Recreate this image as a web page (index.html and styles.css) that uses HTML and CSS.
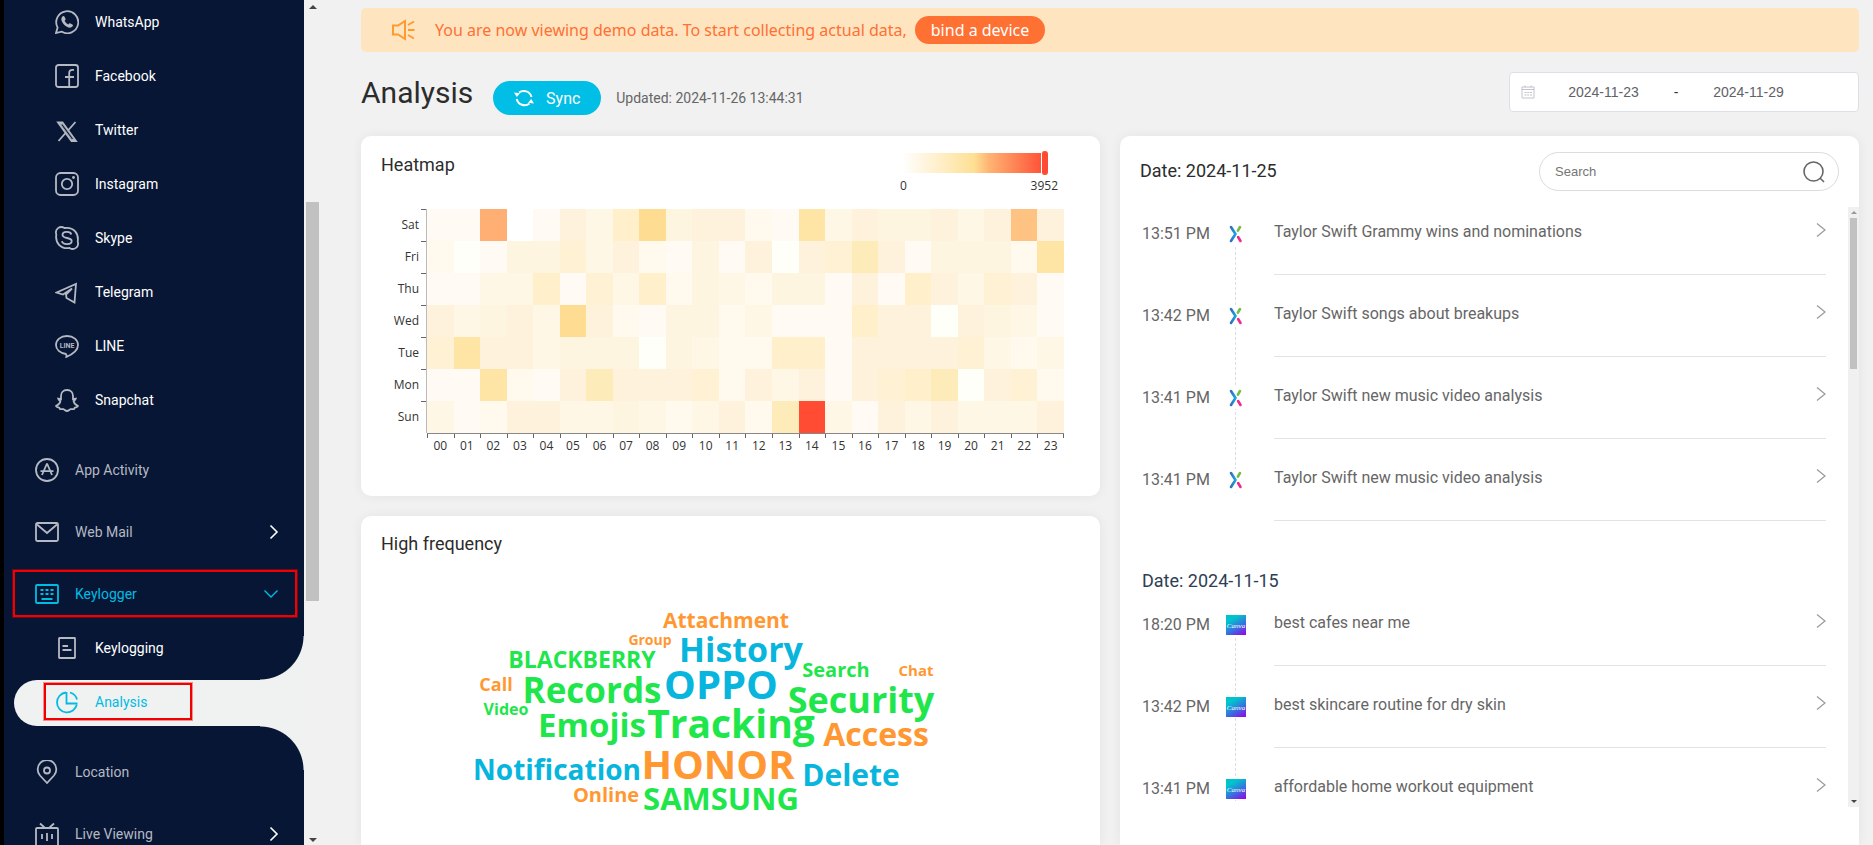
FILE: index.html
```html
<!DOCTYPE html>
<html lang="en">
<head>
<meta charset="utf-8">
<title>Keylogger Analysis</title>
<link rel="stylesheet" href="styles.css">
</head>
<body>
<svg class="defs" aria-hidden="true">
  <defs>
    <linearGradient id="canva" x1="0.2" y1="0" x2="0.8" y2="1">
      <stop offset="0.2" stop-color="#00c4cc"/><stop offset="0.65" stop-color="#3b6be0"/><stop offset="1" stop-color="#8a12e8"/>
    </linearGradient>
    <linearGradient id="blue" x1="0" y1="0" x2="1" y2="0">
      <stop offset="0" stop-color="#2f6fc0"/><stop offset="1" stop-color="#1aa5e0"/>
    </linearGradient>
    <symbol id="i-x" viewBox="-2 -1 20 22">
      <path d="M3 3 L7.500 10 L3 17" fill="none" stroke="url(#blue)" stroke-width="2.600" stroke-linejoin="round" stroke-linecap="round"/>
      <path d="M12 3 L9.900 6.600" stroke="#76bc43" stroke-width="2.600" stroke-linecap="round"/>
      <path d="M10.100 13 L12.500 17" stroke="#f0288c" stroke-width="2.600" stroke-linecap="round"/>
    </symbol>
    <symbol id="i-canva" viewBox="0 0 20 20">
      <rect width="20" height="20" fill="url(#canva)"/>
      <text x="10" y="13" text-anchor="middle" class="canva-text">Canva</text>
    </symbol>
    <symbol id="i-go" viewBox="0 0 10 16"><path d="M1 1.500 L9 8 L1 14.500" fill="none" stroke="#999" stroke-width="1.200"/></symbol>
    <symbol id="i-right" viewBox="0 0 10 16"><path d="M1.500 1.500 L8 8 L1.500 14.500" fill="none" stroke="currentColor" stroke-width="1.600"/></symbol>
  </defs>
</svg>
<div class="app">
  <nav class="sidebar">
    <ul class="menu">
      <li>
        <ul class="submenu">
          <li><a class="item sub" href="#"><svg viewBox="0 0 24 24"><path d="M1 23 L2.600 17.500 A11 11 0 1 1 6.500 21.600 Z"/><path class="fill" d="M7.500 6.500c.8-.8 1.600-.6 2 .2l1 2c.3.700-.1 1.300-.9 2 .9 1.700 2 2.800 3.800 3.700.7-.9 1.300-1.300 2-.9l2 1.100c.8.500.8 1.200 0 2-1.300 1.400-3.200 1.300-5.500.1-2.300-1.300-4-3-5-5.200-.9-2-.7-3.700.6-5z"/></svg>WhatsApp</a></li>
          <li><a class="item sub" href="#"><svg viewBox="0 0 24 24"><rect x="1" y="1" width="22" height="22" rx="2.500"/><path d="M19 5.800h-1.500c-2.300 0-3.300 1.200-3.300 3.200V23M10 13h9"/></svg>Facebook</a></li>
          <li><a class="item sub" href="#"><svg viewBox="0 0 24 24"><path d="M3 4.500h4.500L21 23h-4.500ZM20.500 4 13 12.500M3.500 23 11 14.500"/><path d="M5.300 4.500 18.700 23" stroke-width="2.200"/><path d="M6.800 6.500 17.500 21" class="cut"/></svg>Twitter</a></li>
          <li><a class="item sub" href="#"><svg viewBox="0 0 24 24"><rect x="1" y="1" width="22" height="22" rx="4.500"/><circle cx="12" cy="12" r="5.200"/><circle class="fill" cx="18.500" cy="5.500" r="1.400"/></svg>Instagram</a></li>
          <li><a class="item sub" href="#"><svg viewBox="0 0 24 24"><path d="M9.500 2C5-.8-.5 3 1.300 8.500 0 16.500 5.500 23.500 14.500 22c4.500 2.800 10-1 8.200-6.500C24 7.500 18.500.5 9.500 2Z"/><path d="M16.300 8.500C15.500 5 7.500 5 7.500 9c0 4 9.200 2 9.200 6 0 4.200-9 4.200-9.700.2"/></svg>Skype</a></li>
          <li><a class="item sub" href="#"><svg viewBox="0 0 24 24"><path d="M1.500 12.500 21 4 19.500 22.500 11.500 18 11 14.500 17 8.500 8 14.500Z"/></svg>Telegram</a></li>
          <li><a class="item sub" href="#"><svg viewBox="0 0 24 24"><path d="M12 2C5.500 2 1 6 1 11c0 4.500 4 8 10 9 .8.200.5 1.500.3 3C17 20.500 23 16.500 23 11c0-5-4.500-9-11-9Z"/><text class="line-text" x="12" y="13.500" text-anchor="middle">LINE</text></svg>LINE</a></li>
          <li><a class="item sub" href="#"><svg viewBox="0 0 24 24"><path d="M12 2c-4 0-6 2.700-6 6v3.200l-2.800-.6c.3 1.600 1.400 2 2.200 2.500C5 15.500 3.500 17 1 18c.6 1.600 2.400 1.300 3.300 1.800.4.500.3 1.300 1 1.400 1 .1 2-.4 3.200 0C9.800 21.800 10.500 23 12 23s2.200-1.200 3.500-1.800c1.200-.4 2.200.1 3.200 0 .7-.1.600-.9 1-1.400.9-.5 2.700-.2 3.300-1.800-2.500-1-4-2.500-4.400-4.900.8-.5 1.900-.9 2.200-2.500l-2.800.6V8c0-3.300-2-6-6-6Z"/></svg>Snapchat</a></li>
        </ul>
      </li>
      <li><a class="item" href="#"><svg viewBox="0 0 24 24"><circle cx="12" cy="12" r="11"/><path d="M12 5.500 7 17M12 5.500 17 17M5.500 13.200h13"/></svg>App Activity</a></li>
      <li><a class="item" href="#"><svg viewBox="0 0 24 24"><rect x="1" y="3" width="22" height="18" rx="1.500"/><path d="M2 4.500 12 13 22 4.500"/></svg>Web Mail<svg class="arrow"><use href="#i-right"/></svg></a></li>
      <li>
        <a class="item open" href="#"><svg viewBox="0 0 24 24"><rect x="1" y="3" width="22" height="18" rx="1"/><path d="M5.500 8h3M10.500 8h3M15.500 8h3M5.500 12h3M10.500 12h3M15.500 12h3M6.500 17h11"/></svg>Keylogger<svg class="arrow down" viewBox="0 0 16 10"><path d="M1.500 1.500 8 8 14.500 1.500"/></svg></a>
        <ul class="submenu">
          <li><a class="item sub" href="#"><svg viewBox="0 0 24 24"><rect x="4" y="2" width="16" height="20" rx=".5"/><path d="M7.500 10h5.500M7.500 14h9"/></svg>Keylogging</a></li>
          <li><a class="item sub current" href="#"><svg viewBox="0 0 24 24"><path d="M11 2.500A10 10 0 1 0 21.800 14.500"/><path d="M11.500 2v11.500H22.500M15 2.500A10 10 0 0 1 22 9.500"/></svg>Analysis</a></li>
        </ul>
      </li>
      <li><a class="item" href="#"><svg viewBox="0 0 24 24"><path d="M12 23 5 15.500A9.300 9.300 0 1 1 19 15.500Z"/><circle cx="12" cy="10.500" r="3"/></svg>Location</a></li>
      <li><a class="item" href="#"><svg viewBox="0 0 24 24"><rect x="1" y="6" width="22" height="18" rx="1"/><path d="M5 1.500 9.500 5.500M19 1.500 14.500 5.500M7 12v5M12 11v8M17 12v5"/></svg>Live Viewing<svg class="arrow"><use href="#i-right"/></svg></a></li>
    </ul>
  </nav>
  <div class="scroll" aria-hidden="true"><i class="up"></i><i class="thumb"></i><i class="dn"></i></div>
  <main class="main">
    <div class="banner">
      <svg class="horn" viewBox="0 0 24 22"><path d="M2 6.500h5L14 2v18l-7-4.500H2ZM17 6l6-3.500M17 11h6.500M17 16l6 3.500"/></svg>
      <span>You are now viewing demo data. To start collecting actual data,</span>
      <a class="bind" href="#">bind a device</a>
    </div>
    <header class="head">
      <h1>Analysis</h1>
      <button class="sync" type="button"><svg viewBox="0 0 20 18"><path d="M5 3.500A8 8 0 0 1 17.500 8M15.500 14.500A8 8 0 0 1 2.700 10"/><path class="tip" d="M0 3.500 2.800 8 6 4.200ZM20 14.500 17.200 10 14 13.800Z"/></svg>Sync</button>
      <span class="updated">Updated: 2024-11-26 13:44:31</span>
      <div class="dates">
        <svg viewBox="0 0 14 14"><path d="M1 2h12v11H1ZM1 4.500h12M4 .5v2M10 .5v2M3.500 7.500h2M6.200 7.500h2M9 7.500h2M3.500 10h2M6.200 10h2M9 10h2"/></svg>
        <input type="text" aria-label="Start date" value="2024-11-23">
        <span>-</span>
        <input type="text" aria-label="End date" value="2024-11-29">
      </div>
    </header>
    <div class="cols">
      <div class="col">
        <section class="card heat">
          <div class="heat-head">
            <h2>Heatmap</h2>
            <div class="legend"><div class="ramp"><i></i></div><div class="ends"><span>0</span><span>3952</span></div></div>
          </div>
          <div class="chart">
            <div class="days"><span>Sat</span><span>Fri</span><span>Thu</span><span>Wed</span><span>Tue</span><span>Mon</span><span>Sun</span></div>
            <div class="plot" id="plot"></div>
            <div class="hours" id="hours"></div>
          </div>
        </section>
        <section class="card words">
          <h2>High frequency</h2>
          <svg class="cloud" viewBox="0 0 739 260" id="cloud" role="img" aria-label="Most frequent words"></svg>
        </section>
      </div>
      <section class="card log">
        <div class="log-head">
          <h2>Date: 2024-11-25</h2>
          <label class="search"><input type="search" aria-label="Search" placeholder="Search"><svg viewBox="0 0 22 22"><circle cx="10.500" cy="10.500" r="9.500"/><path d="M17.200 17.200 21 21"/></svg></label>
        </div>
        <div class="log-body">
          <div class="list">
            <ol class="group">
              <li><time>13:51 PM</time><svg class="mark"><use href="#i-x"/></svg><a href="#">Taylor Swift Grammy wins and nominations<svg><use href="#i-go"/></svg></a></li>
              <li><time>13:42 PM</time><svg class="mark"><use href="#i-x"/></svg><a href="#">Taylor Swift songs about breakups<svg><use href="#i-go"/></svg></a></li>
              <li><time>13:41 PM</time><svg class="mark"><use href="#i-x"/></svg><a href="#">Taylor Swift new music video analysis<svg><use href="#i-go"/></svg></a></li>
              <li><time>13:41 PM</time><svg class="mark"><use href="#i-x"/></svg><a href="#">Taylor Swift new music video analysis<svg><use href="#i-go"/></svg></a></li>
            </ol>
            <h3>Date: 2024-11-15</h3>
            <ol class="group">
              <li><time>18:20 PM</time><svg class="mark"><use href="#i-canva"/></svg><a href="#">best cafes near me<svg><use href="#i-go"/></svg></a></li>
              <li><time>13:42 PM</time><svg class="mark"><use href="#i-canva"/></svg><a href="#">best skincare routine for dry skin<svg><use href="#i-go"/></svg></a></li>
              <li><time>13:41 PM</time><svg class="mark"><use href="#i-canva"/></svg><a href="#">affordable home workout equipment<svg><use href="#i-go"/></svg></a></li>
            </ol>
          </div>
          <div class="scroll thin" aria-hidden="true"><i class="up"></i><i class="thumb"></i><i class="dn"></i></div>
        </div>
      </section>
    </div>
  </main>
</div>
<script src="script.js"></script>
</body>
</html>
```

FILE: styles.css
```css
*, *::before, *::after { box-sizing: border-box; margin: 0; padding: 0; }
html, body { height: 100%; overflow: hidden; }
body { font-family: Roboto, "Liberation Sans", sans-serif; background: #f1f1f1; color: #2c2c2c; }
ul, ol { list-style: none; }
a { color: inherit; text-decoration: none; }
h1, h2, h3 { font-weight: 400; }
svg { flex: none; }
.defs { position: absolute; width: 0; height: 0; }
.canva-text { font: italic 7px "Liberation Serif", serif; fill: #fff; }

.app { display: flex; height: 100%; overflow: hidden; }

/* sidebar */
.sidebar { flex: none; width: 304px; border-left: 4px solid #000; background: #071635; overflow: hidden; }
.menu { display: flex; flex-direction: column; gap: 8px; margin-top: -4px; }
.submenu { padding-bottom: 8px; }
.item { position: relative; display: flex; align-items: center; gap: 16px; height: 54px; padding: 0 25px 2px 31px; font-size: 14px; color: #b5b9c2; }
.item svg { width: 24px; height: 24px; fill: none; stroke: #b5b9c2; stroke-width: 1.8; }
.item .fill { fill: #b5b9c2; stroke: none; }
.item .cut { stroke: #071635; stroke-width: 1.2; }
.line-text { font: 700 7px Roboto, sans-serif; fill: #b5b9c2; stroke: none; }
.item.sub { padding-left: 51px; color: #fff; }
.item .arrow { width: 10px; height: 16px; margin-left: auto; color: #fff; }
.item .arrow.down { width: 16px; height: 10px; stroke-width: 1.4; }
.item.open { color: #00bce4; }
.item.open svg { stroke: #00bce4; }
.item.open::after, .item.current::after { content: ""; position: absolute; border: 2px solid #f00000; box-shadow: 0 0 0 1px #f0000066; }
.item.open::after { inset: 2px 7px 5px 9px; }
.item.current { height: 46px; margin: 4px 0 4px 10px; padding-left: 41px; border-radius: 23px 0 0 23px; background: #f0f1f1; color: #00bce4; }
.item.current svg { stroke: #00bce4; }
.item.current::after { left: 30px; top: 3px; width: 148px; height: 37px; }
.item.current::before { content: ""; position: absolute; right: 0; top: -44px; bottom: -44px; width: 44px; pointer-events: none;
  background: radial-gradient(circle at 0 0, #0000 43px, #f0f1f1 44px) top / 44px 44px no-repeat,
    radial-gradient(circle at 0 100%, #0000 43px, #f0f1f1 44px) bottom / 44px 44px no-repeat; }

/* scroll bars */
.scroll { flex: none; width: 13px; margin-left: 2px; display: flex; flex-direction: column; align-items: center; padding: 5px 0 3px; }
.scroll i { display: block; }
.up, .dn { border: 4px solid #0000; }
.up { border-top: 0; border-bottom-color: #444; }
.dn { border-bottom: 0; border-top-color: #444; margin-top: auto; }
.thumb { width: 100%; height: 399px; margin-top: 193px; background: #c1c1c1; }
.scroll.thin { width: 11px; margin: 0; padding: 4px 0; background: #f0f0f0; }
.thin .up, .thin .dn { border-width: 3px; }
.thin .up { border-top: 0; border-bottom-color: #999; }
.thin .dn { border-bottom: 0; }
.thin .thumb { width: 7px; height: 151px; margin-top: 4px; }

/* page */
.main { flex: 1; min-width: 0; padding: 8px 14px 0 42px; display: flex; flex-direction: column; }
.banner { flex: none; display: flex; align-items: center; height: 44px; padding-left: 30px; border-radius: 5px; background: #ffe4c0; color: #ff7033; font: 16px "Noto Sans", "Open Sans", sans-serif; }
.horn { width: 24px; height: 22px; margin-right: 20px; fill: none; stroke: #ff9a2e; stroke-width: 2; }
.bind { margin-left: 8px; height: 28px; line-height: 28px; padding: 0 16px; border-radius: 14px; background: #ff7033; color: #fff; }
.head { flex: none; display: flex; height: 40px; margin: 20px 0 24px; }
h1 { font-size: 30px; line-height: 42px; }
.sync { display: flex; align-items: center; justify-content: center; gap: 12px; width: 108px; height: 34px; margin: 9px 15px 0 20px; border: 0; border-radius: 17px; background: #00bee5; color: #fff; font: 16px Roboto, sans-serif; }
.sync svg { width: 20px; height: 18px; fill: none; stroke: #fff; stroke-width: 2; }
.sync .tip { fill: #fff; stroke: none; }
.updated { margin-top: 9px; line-height: 34px; font-size: 14px; color: #666; }
.dates { display: flex; align-items: center; width: 350px; margin-left: auto; padding-left: 11px; border: 1px solid #dcdfe6; border-radius: 4px; background: #fff; font: 14px "Liberation Sans", sans-serif; }
.dates svg { width: 14px; height: 14px; fill: none; stroke: #c0c4cc; }
.dates input { width: 137px; border: 0; background: none; text-align: center; font: inherit; color: #606266; }
.dates span { width: 8px; text-align: center; color: #303133; }

.cols { flex: 1; min-height: 0; display: grid; grid-template-columns: 1fr 1fr; gap: 20px; }
.col { display: flex; flex-direction: column; gap: 20px; min-width: 0; min-height: 0; }
.card { border-radius: 10px; background: #fff; box-shadow: 0 0 12px #0000000f; }
h2 { font-size: 18px; line-height: 24px; }
.heat { flex: none; height: 360px; padding: 17px 36px 0 20px; }
.heat-head { display: flex; justify-content: space-between; height: 56px; }
.legend { width: 168px; padding: 0 18px 0 6px; font: 12px "Open Sans", sans-serif; color: #333; }
.ramp { position: relative; height: 20px; margin-bottom: 2px; background: linear-gradient(90deg, #fff, #ffecc0 30%, #fee094 50%, #ffb573 60%, #ff4b33); }
.ramp i { position: absolute; right: -2px; top: -2px; width: 7px; height: 24px; border-left: 1px solid #fff; border-radius: 3px; background: #ff4b33; }
.ends { display: flex; justify-content: space-between; margin: 4px -12px 0 -2px; line-height: 18px; }
.chart { display: grid; grid-template-columns: 46px 1fr; font: 12px "Open Sans", sans-serif; color: #333; }
.days { display: grid; grid-auto-rows: 32px; line-height: 32px; text-align: right; border-right: 1px solid #bbb; }
.days span { padding-right: 7px; background: linear-gradient(#666, #666) right top / 5px 1px no-repeat; }
.plot { display: grid; grid-template-columns: repeat(24, 1fr); grid-auto-rows: 32px; }
.hours { grid-column: 2; display: grid; grid-template-columns: repeat(24, 1fr); border-top: 1px solid #888; text-align: center; line-height: 24px; }
.hours span { background: linear-gradient(#666, #666) left top / 1px 4px no-repeat; }
.hours span:last-child { background: linear-gradient(#666, #666) left top / 1px 4px no-repeat, linear-gradient(#666, #666) right top / 1px 4px no-repeat; }
.v0 { background: #fff; } .va { background: #fffffa; } .vb { background: #fffaf4; } .vc { background: #fff9ee; }
.vd { background: #fff7e6; } .ve { background: #fef5e0; } .vf { background: #fff2dc; } .vg { background: #fff1d3; }
.vh { background: #ffefcb; } .vi { background: #feebba; } .vj { background: #fee5a5; } .vk { background: #fedd92; }
.vo { background: #fec382; } .vp { background: #ffaf74; } .vr { background: #ff4c33; }

.words { flex: 1; min-height: 0; overflow: hidden; border-radius: 10px 10px 0 0; }
.words h2 { margin: 16px 20px 24px; }
.cloud { display: block; width: 100%; font-family: "Open Sans", "Noto Sans", sans-serif; font-weight: 700; }
.orange { fill: #ff9833; } .green { fill: #1ee64b; } .cyan { fill: #08b5dd; }

/* log */
.log { border-radius: 10px 10px 0 0; min-width: 0; min-height: 0; }
.log-head { display: flex; justify-content: space-between; align-items: center; height: 71px; padding: 0 20px; }
.log-head h2 { padding-bottom: 2px; }
.search { display: flex; align-items: center; width: 300px; height: 39px; padding: 0 13px 0 15px; border: 1px solid #dcdcdc; border-radius: 20px; }
.search input { flex: 1; min-width: 0; border: 0; outline: 0; background: none; font: 13px "Liberation Sans", sans-serif; }
.search input::placeholder { color: #757575; }
.search svg { width: 22px; height: 22px; fill: none; stroke: #666; stroke-width: 1.6; }
.log-body { display: flex; height: 600px; }
.list { flex: 1; overflow: hidden; padding: 0 22px; color: #666; }
.group { position: relative; }
.group::before { content: ""; position: absolute; left: 93px; top: 40px; width: 1px; height: calc(100% - 82px); background: repeating-linear-gradient(#ddd 0 3px, #0000 3px 5px); }
.group li { position: relative; display: grid; grid-template-columns: 84px 20px 1fr; height: 82px; font-size: 16px; line-height: 20px; }
time { margin-top: 17px; }
.mark { width: 20px; height: 22px; margin-top: 16px; background: #fff; }
.group a { display: flex; justify-content: space-between; height: 68px; margin-left: 28px; padding-top: 15px; border-bottom: 1px solid #e3e3e3; }
.group a svg { width: 10px; height: 16px; }
h3 { height: 63px; padding-top: 34px; font-size: 18px; line-height: 24px; color: #2f3e55; }
```

FILE: script.js
```js
// One letter per hour; each letter names a colour step (.va, .vb, ...).
const rows = [
  'bbp0bfdhkeffcbjdfeefdfof',
  'cabeegdfcbebfafgifbeeecj',
  'bbddhbgdhcedceebfbhfdgfb',
  'fdefdkfcbeecdbbbhffafedb',
  'gjffdeeeaedcchhbffffgdcd',
  'bbjcbfifffgcfdfbfghiafgc',
  'dbcffddedcdfcirdbfdfdddf'
];
document.getElementById('plot').innerHTML =
  rows.join('').split('').map(v => `<i class="v${v}"></i>`).join('');
document.getElementById('hours').innerHTML =
  rows[0].split('').map((_, h) => `<span>${String(h).padStart(2, '0')}</span>`).join('');

// text, centre x, baseline y, size, colour
const words = [
  ['Attachment', 365, 48, 21, 'orange'], ['Group', 289, 65, 14, 'orange'],
  ['History', 380, 82, 34, 'cyan'], ['BLACKBERRY', 221, 88, 23, 'green'],
  ['Search', 475, 97, 20, 'green'], ['Chat', 555, 96, 15, 'orange'],
  ['Call', 135, 111, 18, 'orange'], ['Records', 231, 123, 35, 'green'],
  ['OPPO', 360, 119, 40, 'cyan'], ['Security', 500, 133, 36, 'green'],
  ['Video', 145, 135, 16, 'green'], ['Emojis', 231, 157, 33, 'green'],
  ['Tracking', 370, 158, 39, 'green'], ['Access', 515, 166, 32, 'orange'],
  ['Notification', 196, 200, 28, 'cyan'], ['HONOR', 357, 199, 40, 'orange'],
  ['Delete', 490, 206, 30, 'cyan'], ['Online', 245, 222, 20, 'orange'],
  ['SAMSUNG', 360, 230, 31, 'green']
];
document.getElementById('cloud').innerHTML = words.map(([t, x, y, s, c]) =>
  `<text x="${x}" y="${y}" font-size="${s}" text-anchor="middle" class="${c}">${t}</text>`).join('');
```
